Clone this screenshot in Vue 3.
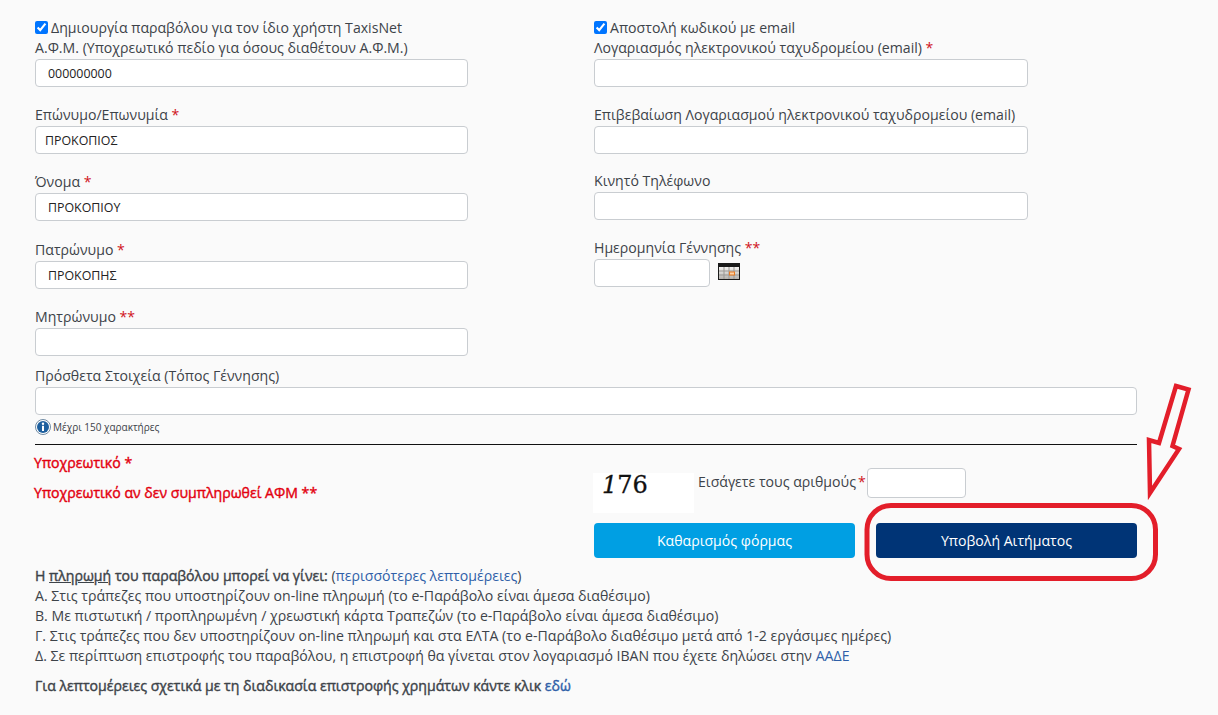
<template>
  <div class="page">
    <form class="form" @submit.prevent>
      <div class="columns">
        <div class="col">
          <label class="check"><input type="checkbox" checked> Δημιουργία παραβόλου για τον ίδιο χρήστη TaxisNet</label>
          <div class="field">
            <label>Α.Φ.Μ. (Υποχρεωτικό πεδίο για όσους διαθέτουν Α.Φ.Μ.)</label>
            <input class="pad_wide" type="text" value="000000000">
          </div>
          <div class="field">
            <label>Επώνυμο/Επωνυμία <span class="req">*</span></label>
            <input type="text" value="ΠΡΟΚΟΠΙΟΣ">
          </div>
          <div class="field">
            <label>Όνομα <span class="req">*</span></label>
            <input class="pad_wide" type="text" value="ΠΡΟΚΟΠΙΟΥ">
          </div>
          <div class="field field_low">
            <label>Πατρώνυμο <span class="req">*</span></label>
            <input class="pad_wide" type="text" value="ΠΡΟΚΟΠΗΣ">
          </div>
          <div class="field field_last">
            <label>Μητρώνυμο <span class="req">**</span></label>
            <input type="text">
          </div>
        </div>
        <div class="col col_right">
          <label class="check"><input type="checkbox" checked> Αποστολή κωδικού με email</label>
          <div class="field">
            <label>Λογαριασμός ηλεκτρονικού ταχυδρομείου (email) <span class="req">*</span></label>
            <input type="text">
          </div>
          <div class="field field_tight">
            <label>Επιβεβαίωση Λογαριασμού ηλεκτρονικού ταχυδρομείου (email)</label>
            <input type="text">
          </div>
          <div class="field">
            <label>Κινητό Τηλέφωνο</label>
            <input type="text">
          </div>
          <div class="field">
            <label>Ημερομηνία Γέννησης <span class="req">**</span></label>
            <div class="date_row">
              <input class="date" type="text">
              <svg class="calendar" width="22" height="17" viewBox="0 0 22 17">
                <defs>
                  <linearGradient id="calFill" x1="0" y1="0" x2="0" y2="1">
                    <stop offset="0" stop-color="#f4f3f1" />
                    <stop offset="1" stop-color="#b5b2ae" />
                  </linearGradient>
                </defs>
                <rect width="22" height="17" fill="#1a1a1a" />
                <rect x="1" y="4" width="20" height="12" fill="url(#calFill)" />
                <path d="M1 8h20M1 12h20M6 4v12M11 4v12M16 4v12" stroke="#9a9793" stroke-width="1" fill="none" />
                <rect x="11.500" y="9" width="5" height="3" fill="#fbd3a8" stroke="#ea7a22" stroke-width="1" />
              </svg>
            </div>
          </div>
        </div>
      </div>

      <div class="field extra">
        <label>Πρόσθετα Στοιχεία (Τόπος Γέννησης)</label>
        <input class="full" type="text">
      </div>
      <div class="hint">
        <svg width="16" height="16" viewBox="0 0 16 16">
          <circle cx="8" cy="8" r="7.500" fill="#fff" stroke="#6f8aa3" />
          <circle cx="8" cy="8" r="6" fill="#1d5f9e" />
          <circle cx="8" cy="4.800" r="1.200" fill="#fff" />
          <rect x="7" y="6.800" width="2" height="5.200" fill="#fff" />
        </svg>
        <span>Μέχρι 150 χαρακτήρες</span>
      </div>
      <hr class="rule">

      <div class="columns bottom">
        <div class="legend">
          <p>Υποχρεωτικό *</p>
          <p>Υποχρεωτικό αν δεν συμπληρωθεί ΑΦΜ **</p>
        </div>
        <div class="actions">
          <div class="captcha_row">
            <div class="captcha"><i>1</i>76</div>
            <label>Εισάγετε τους αριθμούς<span class="req">*</span></label>
            <input class="captcha_input" type="text">
          </div>
          <div class="buttons">
            <button class="btn btn_clear" type="button">Καθαρισμός φόρμας</button>
            <button class="btn btn_submit" type="submit">Υποβολή Αιτήματος</button>
          </div>
        </div>
      </div>

      <div class="notes">
        <p><b>Η <u>πληρωμή</u> του παραβόλου μπορεί να γίνει:</b> (<a href="#">περισσότερες λεπτομέρειες</a>)</p>
        <p>Α. Στις τράπεζες που υποστηρίζουν on-line πληρωμή (το e-Παράβολο είναι άμεσα διαθέσιμο)</p>
        <p>Β. Με πιστωτική / προπληρωμένη / χρεωστική κάρτα Τραπεζών (το e-Παράβολο είναι άμεσα διαθέσιμο)</p>
        <p>Γ. Στις τράπεζες που δεν υποστηρίζουν on-line πληρωμή και στα ΕΛΤΑ (το e-Παράβολο διαθέσιμο μετά από 1-2 εργάσιμες ημέρες)</p>
        <p>Δ. Σε περίπτωση επιστροφής του παραβόλου, η επιστροφή θα γίνεται στον λογαριασμό IBAN που έχετε δηλώσει στην <a href="#">ΑΑΔΕ</a></p>
        <p class="refund"><b>Για λεπτομέρειες σχετικά με τη διαδικασία επιστροφής χρημάτων κάντε κλικ</b> <a class="strong" href="#">εδώ</a></p>
      </div>
    </form>

    <!-- red annotation drawn on top of the screenshot -->
    <svg class="annotation" width="1218" height="715" viewBox="0 0 1218 715">
      <rect x="867" y="505.500" width="288.500" height="73" rx="24" fill="none" stroke="#e31e2a" stroke-width="5" />
      <path d="M1176 386L1188.500 389.500L1172.500 446L1179 449L1150 493L1149 440L1159 443Z" fill="none" stroke="#e31e2a" stroke-width="4.500" />
    </svg>
  </div>
</template>

<script setup>
</script>

<style>
html, body {
  background: #fafafa;
}
</style>

<style scoped>
.page {
  position: relative;
  height: 715px;
  overflow: hidden;
  background: #fafafa;
  font-family: "Open Sans", "Noto Sans", sans-serif;
  font-size: 14.120px;
  line-height: 20px;
  color: #3d4349;
}
.form {
  width: 1102px;
  padding: 17px 0 0 35px;
}
.columns {
  display: grid;
  grid-template-columns: 559px 543px;
}
.check {
  display: flex;
  align-items: center;
  gap: 3px;
  height: 21px;
}
.check input {
  width: 13px;
  height: 13px;
  margin: 0;
  accent-color: #0075ff;
}
.field {
  margin-bottom: 18px;
}
.field_low {
  padding-top: 1px;
}
.field_last {
  margin-bottom: 10px;
}
.field_tight {
  margin-bottom: 17px;
}
.field label {
  display: block;
  height: 21px;
}
.req {
  color: #d0121b;
}
input[type="text"] {
  display: block;
  box-sizing: border-box;
  width: 433px;
  height: 28px;
  padding: 0 9px;
  border: 1px solid #c9cdd1;
  border-radius: 4px;
  background: #fff;
  font-family: inherit;
  font-size: 12.400px;
  color: #222;
}
input.pad_wide {
  padding: 0 12px;
}
.col_right input[type="text"] {
  width: 434px;
}
.date_row {
  display: flex;
  align-items: flex-start;
  gap: 8px;
}
.col_right input.date {
  width: 116px;
}
.calendar {
  margin-top: 4px;
}
.extra {
  margin-bottom: 0;
}
input.full {
  width: 1102px;
}
.hint {
  display: flex;
  align-items: center;
  gap: 2px;
  height: 16px;
  margin-top: 4px;
  font-size: 10px;
}
.rule {
  height: 1px;
  margin: 9px 0 0;
  border: 0;
  background: #111;
}
.bottom {
  margin-top: 8px;
}
.legend {
  color: #e3000f;
  -webkit-text-stroke: 0.4px currentColor;
}
.legend p {
  margin: 0 0 10px -1px;
}
.actions {
  width: 543px;
}
.captcha_row {
  display: flex;
  align-items: flex-start;
  margin-top: 15px;
}
.captcha {
  width: 101px;
  height: 40px;
  margin: 5px 4px 0 -1px;
  padding-left: 9px;
  box-sizing: border-box;
  background: #fff;
  font-family: "DejaVu Serif", serif;
  font-size: 24px;
  line-height: 25px;
  color: #111;
  -webkit-text-stroke: 0.3px currentColor;
}
.captcha_row label {
  margin-top: 4px;
}
.captcha_row .req {
  margin-left: 2px;
}
input.captcha_input {
  width: 99px;
  height: 30px;
  margin-left: 1px;
}
.buttons {
  display: flex;
  gap: 21px;
  margin-top: 10px;
}
.btn {
  width: 261px;
  height: 35px;
  border: 0;
  border-radius: 4px;
  font-family: inherit;
  font-size: 14.120px;
  color: #fff;
}
.btn_clear {
  background: #009fe3;
}
.btn_submit {
  background: #003476;
}
.notes {
  margin-top: 8px;
}
.notes p {
  margin: 0;
}
.notes a {
  color: #2f5fa8;
  text-decoration: none;
}
.notes a.strong {
  -webkit-text-stroke: 0.4px currentColor;
}
.notes b {
  font-weight: 400;
  -webkit-text-stroke: 0.4px currentColor;
}
.notes .refund {
  margin-top: 10px;
}
.annotation {
  position: absolute;
  top: 0;
  left: 0;
  pointer-events: none;
}
</style>
